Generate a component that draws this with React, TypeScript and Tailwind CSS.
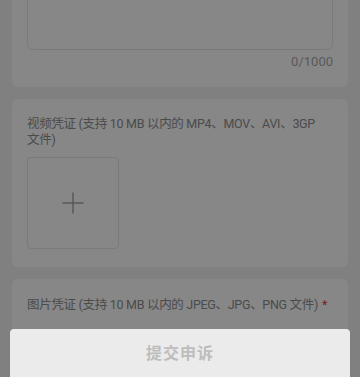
export default function App() {
  const font = { fontFamily: 'Roboto, "Noto Sans CJK SC", "Noto Sans", sans-serif' };
  return (
    <div className="relative h-[377px] w-[360px] overflow-hidden bg-[#f2f2f2]" style={font}>
      <div className="flex flex-col gap-3 px-3 -mt-[40px]">
        {/* description card */}
        <div className="rounded-md bg-white px-[15px] pt-[15px] pb-[16px]">
          <div className="h-[75px] rounded-md border border-[#e6e6e6]" />
          <p className="mt-[3px] text-right text-[13px] leading-[18px] text-[#aaaaaa]">0/1000</p>
        </div>

        {/* video card */}
        <div className="rounded-md bg-white px-[15px] pt-[17px] pb-[18px]">
          <p className="whitespace-nowrap text-[12.5px] leading-[16px] tracking-[-0.3px] text-[#8e8e8e]">
            视频凭证 (支持 10 MB 以内的 MP4、MOV、AVI、3GP
            <br />
            文件)
          </p>
          <div className="mt-[9px] flex h-[92px] w-[92px] items-center justify-center rounded-[4px] border border-[#e6e6e6]">
            <svg width="24" height="24" viewBox="0 0 24 24" fill="none" stroke="#a8a8a8" strokeWidth="1.5">
              <path d="M12 1.5v21M1.5 12h21" />
            </svg>
          </div>
        </div>

        {/* image card */}
        <div className="h-[80px] rounded-md bg-white px-[15px] pt-[18px]">
          <p className="whitespace-nowrap text-[12.5px] leading-[16px] tracking-[-0.3px] text-[#8e8e8e]">
            图片凭证 (支持 10 MB 以内的 JPEG、JPG、PNG 文件)
            <span className="ml-1 text-[#e0443a]">*</span>
          </p>
        </div>
      </div>

      {/* dim overlay */}
      <div className="absolute inset-0 bg-black/[0.47]" />

      {/* submit button */}
      <div className="absolute left-[10px] right-[10px] top-[329px] flex h-[60px] items-start justify-center rounded-t-[4px] bg-[#ebebeb] pt-[13px]">
        <span className="text-[16px] font-semibold leading-[24px] tracking-[1px] text-[#bdbdbd]">提交申诉</span>
      </div>
    </div>
  );
}
